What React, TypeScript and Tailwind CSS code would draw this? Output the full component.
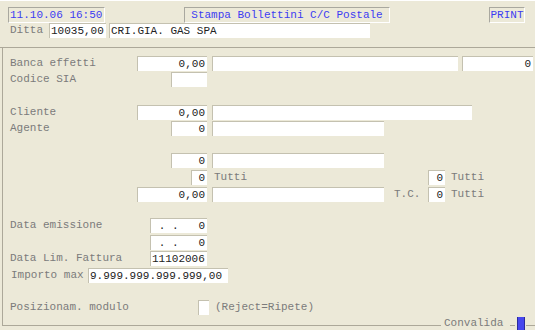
import React from "react";

const Field = ({
  w,
  children,
  align = "right",
  className = "",
}: {
  w: string;
  children?: React.ReactNode;
  align?: "left" | "right";
  className?: string;
}) => (
  <div
    className={`${w} h-[15px] shrink-0 bg-white border-t border-l border-[#c4c1b0] leading-[14px] whitespace-pre text-[#222] overflow-hidden ${
      align === "right" ? "text-right pr-[2px]" : "text-left pl-[1px]"
    } ${className}`}
  >
    {children}
  </div>
);

const Label = ({ children }: { children: React.ReactNode }) => (
  <span className="text-[#7b7b7b] whitespace-pre leading-[15px]">{children}</span>
);

const Left = ({ label, children }: { label?: string; children: React.ReactNode }) => (
  <div className="w-[197px] shrink-0 flex justify-between items-center">
    <Label>{label ?? ""}</Label>
    {children}
  </div>
);

const HeadBox = ({ w, children }: { w: string; children: React.ReactNode }) => (
  <div
    className={`${w} h-[16px] shrink-0 border-t border-l border-b border-r border-t-[#a9a89f] border-l-[#a9a89f] border-b-white border-r-white text-center leading-[14px] text-[#3c3cf2] whitespace-pre`}
  >
    {children}
  </div>
);

export default function App() {
  return (
    <div className="w-[535px] h-[330px] bg-[#ece9d8] font-['Liberation_Mono',monospace] text-[11px] leading-[15px] overflow-hidden">
      {/* header */}
      <div className="h-[48px] border-t border-t-white border-b border-b-[#aca899] pt-[6px]">
        <div className="flex">
          <div className="ml-[8px]">
            <HeadBox w="w-[97px]">
              <span className="block text-left pl-[1px]">11.10.06 16:50</span>
            </HeadBox>
          </div>
          <div className="ml-[79px]">
            <HeadBox w="w-[206px]">Stampa Bollettini C/C Postale</HeadBox>
          </div>
          <div className="ml-[99px]">
            <HeadBox w="w-[36px]">PRINT</HeadBox>
          </div>
        </div>
        <div className="flex items-center">
          <div className="ml-[10px] w-[39px]">
            <Label>Ditta</Label>
          </div>
          <Field w="w-[57px]" align="left">10035,00</Field>
          <Field w="w-[261px]" align="left" className="ml-[3px]">
            CRI.GIA. GAS SPA
          </Field>
        </div>
      </div>

      {/* body */}
      <div className="ml-[2px] h-[269px] border-l border-[#aca899] pl-[7px] pt-[8px]">
        <div className="flex items-center">
          <Left label="Banca effetti">
            <Field w="w-[70px]">0,00</Field>
          </Left>
          <Field w="w-[246px]" className="ml-[5px]" />
          <Field w="w-[71px]" className="ml-[4px] border-[#a5a5a5]">0</Field>
        </div>
        <div className="flex items-center mt-[1px]">
          <Left label="Codice SIA">
            <Field w="w-[36px]" />
          </Left>
        </div>

        <div className="flex items-center mt-[18px]">
          <Left label="Cliente">
            <Field w="w-[70px]">0,00</Field>
          </Left>
          <Field w="w-[260px]" className="ml-[5px]" />
        </div>
        <div className="flex items-center mt-[1px]">
          <Left label="Agente">
            <Field w="w-[36px]">0</Field>
          </Left>
          <Field w="w-[172px]" className="ml-[5px]" />
        </div>

        <div className="flex items-center mt-[17px]">
          <Left>
            <Field w="w-[36px]">0</Field>
          </Left>
          <Field w="w-[172px]" className="ml-[5px]" />
        </div>
        <div className="flex items-center mt-[2px]">
          <Left>
            <Field w="w-[16px]">0</Field>
          </Left>
          <div className="ml-[5px] w-[172px] pl-[2px]">
            <Label>Tutti</Label>
          </div>
          <Field w="w-[17px]" className="ml-[44px]">0</Field>
          <div className="ml-[6px]">
            <Label>Tutti</Label>
          </div>
        </div>
        <div className="flex items-center mt-[2px]">
          <Left>
            <Field w="w-[70px]">0,00</Field>
          </Left>
          <Field w="w-[172px]" className="ml-[5px]" />
          <div className="ml-[10px] w-[34px]">
            <Label>T.C.</Label>
          </div>
          <Field w="w-[17px]">0</Field>
          <div className="ml-[6px]">
            <Label>Tutti</Label>
          </div>
        </div>

        <div className="flex items-center mt-[16px]">
          <Left label="Data emissione">
            <Field w="w-[57px]">{". .   0"}</Field>
          </Left>
        </div>
        <div className="flex items-center mt-[2px]">
          <Left>
            <Field w="w-[57px]">{". .   0"}</Field>
          </Left>
        </div>
        <div className="flex items-center mt-[1px]">
          <Left label="Data Lim. Fattura">
            <Field w="w-[57px]" align="left">11102006</Field>
          </Left>
        </div>
        <div className="flex items-center mt-[2px]">
          <div className="w-[78px] pl-[1px]">
            <Label>Importo max</Label>
          </div>
          <Field w="w-[140px]" align="left">9.999.999.999.999,00</Field>
        </div>

        <div className="flex items-center mt-[17px]">
          <div className="w-[188px]">
            <Label>Posizionam. modulo</Label>
          </div>
          <Field w="w-[11px]" />
          <div className="ml-[6px]">
            <Label>(Reject=Ripete)</Label>
          </div>
        </div>
      </div>

      {/* footer */}
      <div className="flex items-start h-[13px]">
        <div className="ml-[2px] w-[439px] h-[9px] border-l border-b border-[#aca899]" />
        <span className="ml-[3px] leading-[13px] text-[#7b7b7b]">Convalida</span>
        <div className="ml-[7px] w-[5px] h-px mt-[8px] bg-[#aca899]" />
        <div className="ml-[2px] w-[8px] h-[13px] bg-[#4747ee] border-l border-r border-[#2b2b9c]" />
        <div className="ml-[1px] flex-1 h-px mt-[8px] bg-[#aca899]" />
      </div>
    </div>
  );
}
